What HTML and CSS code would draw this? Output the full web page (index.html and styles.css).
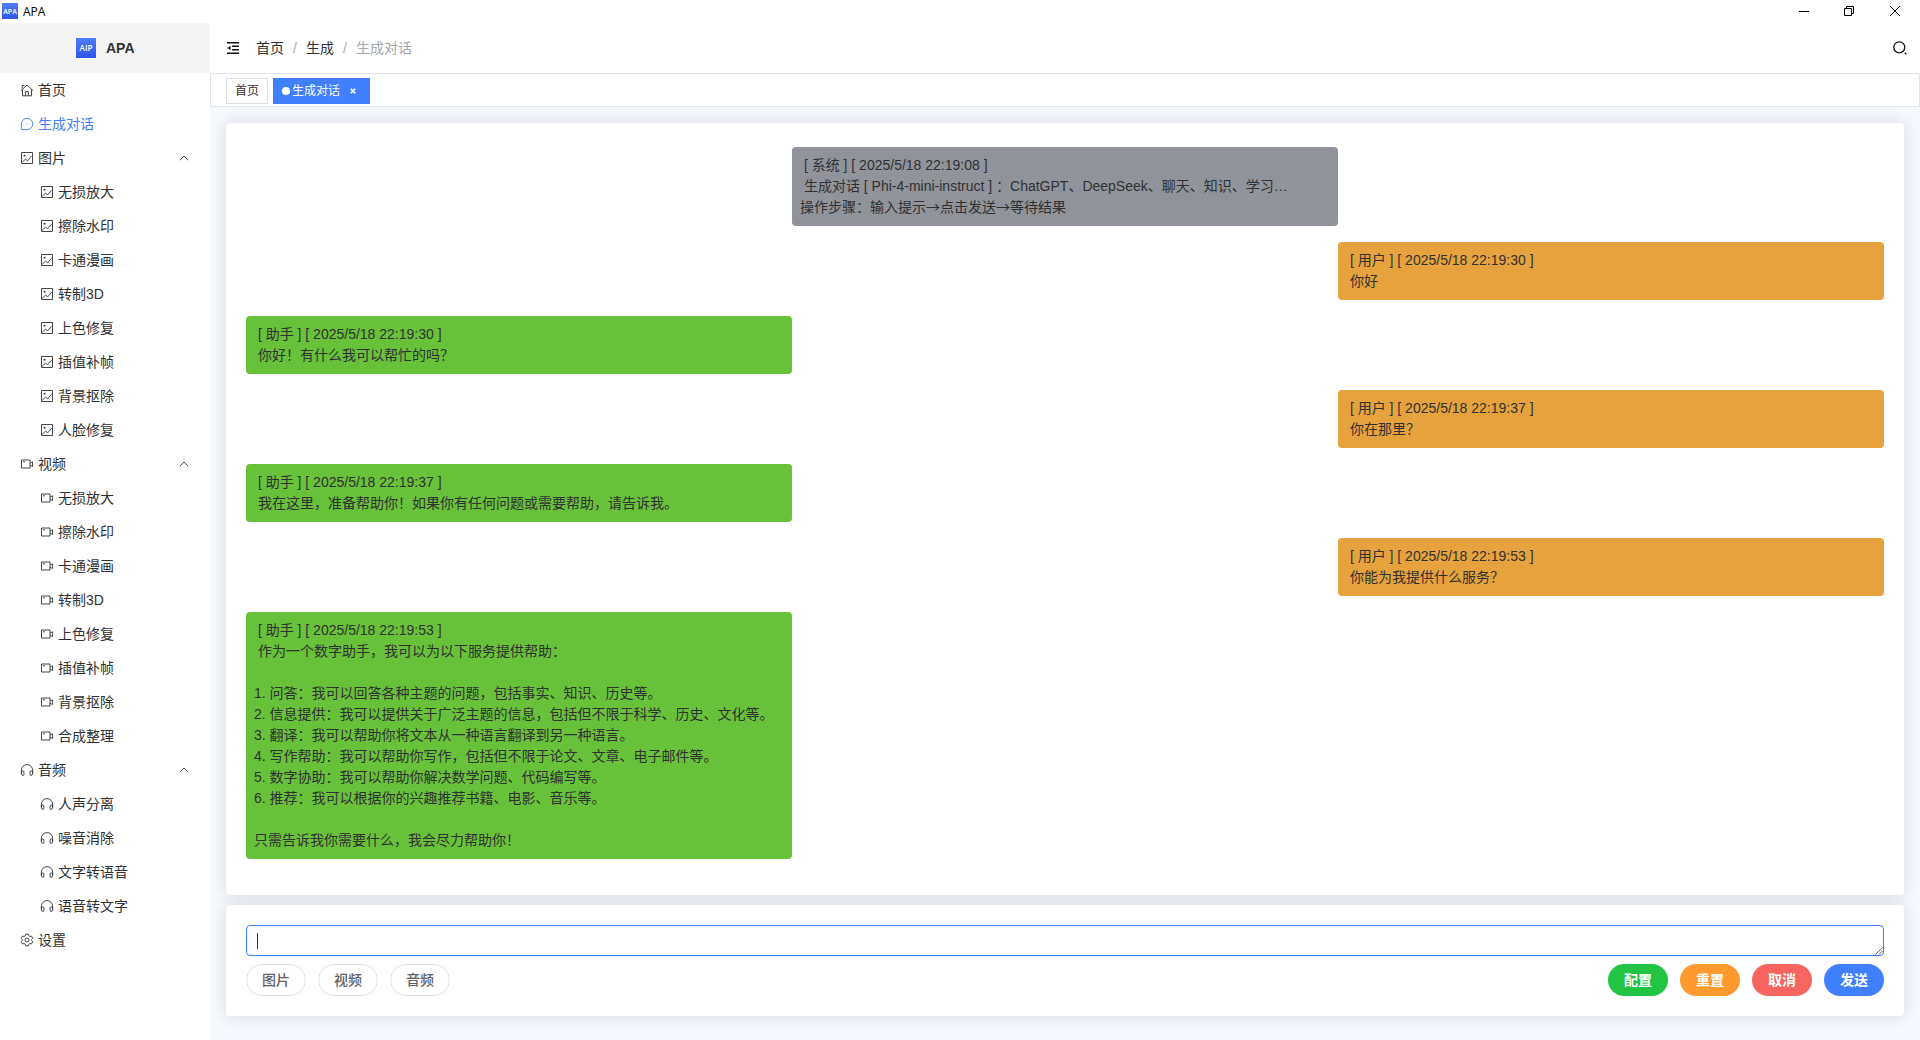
FILE: index.html
```html
<!DOCTYPE html>
<html lang="zh-CN">
<head>
<meta charset="utf-8">
<title>APA</title>
<link rel="stylesheet" href="styles.css">
</head>
<body>
<svg class="sprite" aria-hidden="true">
  <defs>
    <symbol id="home" viewBox="0 0 14 14"><path d="M1 7.600 7 2l6 5.600M2.500 6.500v6.300h9V6.500M2.200 5.500V2.500h2.300M5.600 12.800V8.600h2.800v4.200"/></symbol>
    <symbol id="chat" viewBox="0 0 14 14"><path d="M1.300 12.600V7A5.700 5.600 0 1 1 7 12.600z"/><path d="M6.500 7h1"/></symbol>
    <symbol id="pic" viewBox="0 0 14 14"><path d="M1.500 1.500h11v11h-11zM2.200 11.200l3.300-3 2.200 1.600 3.800-4.600"/><path d="M3.700 4.700h1.800" stroke-width="1.600"/></symbol>
    <symbol id="video" viewBox="0 0 14 14"><path d="M1.500 3h8.500v8H1.500zM10 6.200l2.600-1.400v4.700L10 8.200M3 4.800h2"/></symbol>
    <symbol id="audio" viewBox="0 0 14 14"><path d="M1.400 10.500V7.200a5.600 5.600 0 0 1 11.200 0v3.300"/><path d="M1.400 8h1.500q1 0 1 1v2.600q0 .8-.9.8-1.600 0-1.600-1.900zM12.600 8h-1.500q-1 0-1 1v2.600q0 .8.9.8 1.600 0 1.600-1.900z"/></symbol>
    <symbol id="gear" viewBox="0 0 14 14"><path d="M5.700 1.200h2.600l.5 1.700 1 .6 1.700-.4 1.300 2.200L11.600 6.500v1l1.200 1.200-1.300 2.200-1.700-.4-1 .6-.5 1.700H5.700l-.5-1.700-1-.6-1.700.4-1.300-2.200L2.400 7.500v-1L1.200 5.300l1.300-2.200 1.700.4 1-.6z"/><circle cx="7" cy="7" r="2"/></symbol>
    <symbol id="up" viewBox="0 0 12 12"><path d="M2 8.200 6 4l4 4.200"/></symbol>
    <linearGradient id="blue" x1="0" y1="0" x2="0" y2="1"><stop offset="0" stop-color="#4f7df6"/><stop offset="1" stop-color="#2f55ea"/></linearGradient>
  </defs>
</svg>

<header class="titlebar">
  <svg class="app-icon" viewBox="0 0 16 16"><rect width="16" height="16" fill="url(#blue)"/><text x="8" y="10.500" font-size="7">APA</text></svg>
  <span class="app-name">APA</span>
  <div class="window-controls">
    <svg viewBox="0 0 10 10"><path d="M0 5.500h10"/></svg>
    <svg viewBox="0 0 10 10"><path d="M.5 2.500h7v7h-7zM2.500 2.500v-2h7v7h-2"/></svg>
    <svg viewBox="0 0 10 10"><path d="m0 0 10 10M10 0 0 10"/></svg>
  </div>
</header>

<div class="app">
  <aside class="sidebar">
    <div class="brand">
      <svg class="brand-icon" viewBox="0 0 20 20"><rect width="20" height="20" fill="url(#blue)"/><text x="10" y="13.200" font-size="8.200">AIP</text></svg>
      <span>APA</span>
    </div>
    <nav class="menu">
      <a class="item"><svg><use href="#home"/></svg>首页</a>
      <a class="item active"><svg><use href="#chat"/></svg>生成对话</a>
      <a class="item"><svg><use href="#pic"/></svg>图片<svg class="arrow"><use href="#up"/></svg></a>
      <a class="item sub"><svg><use href="#pic"/></svg>无损放大</a>
      <a class="item sub"><svg><use href="#pic"/></svg>擦除水印</a>
      <a class="item sub"><svg><use href="#pic"/></svg>卡通漫画</a>
      <a class="item sub"><svg><use href="#pic"/></svg>转制3D</a>
      <a class="item sub"><svg><use href="#pic"/></svg>上色修复</a>
      <a class="item sub"><svg><use href="#pic"/></svg>插值补帧</a>
      <a class="item sub"><svg><use href="#pic"/></svg>背景抠除</a>
      <a class="item sub"><svg><use href="#pic"/></svg>人脸修复</a>
      <a class="item"><svg><use href="#video"/></svg>视频<svg class="arrow"><use href="#up"/></svg></a>
      <a class="item sub"><svg><use href="#video"/></svg>无损放大</a>
      <a class="item sub"><svg><use href="#video"/></svg>擦除水印</a>
      <a class="item sub"><svg><use href="#video"/></svg>卡通漫画</a>
      <a class="item sub"><svg><use href="#video"/></svg>转制3D</a>
      <a class="item sub"><svg><use href="#video"/></svg>上色修复</a>
      <a class="item sub"><svg><use href="#video"/></svg>插值补帧</a>
      <a class="item sub"><svg><use href="#video"/></svg>背景抠除</a>
      <a class="item sub"><svg><use href="#video"/></svg>合成整理</a>
      <a class="item"><svg><use href="#audio"/></svg>音频<svg class="arrow"><use href="#up"/></svg></a>
      <a class="item sub"><svg><use href="#audio"/></svg>人声分离</a>
      <a class="item sub"><svg><use href="#audio"/></svg>噪音消除</a>
      <a class="item sub"><svg><use href="#audio"/></svg>文字转语音</a>
      <a class="item sub"><svg><use href="#audio"/></svg>语音转文字</a>
      <a class="item"><svg><use href="#gear"/></svg>设置</a>
    </nav>
  </aside>

  <main class="main">
    <div class="topbar">
      <svg class="fold" viewBox="0 0 12 12"><path d="M0 .75h12M5 4.250h7M5 7.750h7M0 11.250h12" stroke="#111" stroke-width="1.300"/><path d="M.5 6l3-2.300v4.600z" fill="#111"/></svg>
      <div class="crumbs"><span>首页</span><i>/</i><span>生成</span><i>/</i><span class="current">生成对话</span></div>
      <svg class="search" viewBox="0 0 14 14"><circle cx="6.300" cy="6.300" r="5.500"/><path d="m11.800 11.800 1.600 1.600"/></svg>
    </div>
    <div class="tags">
      <a class="tag">首页</a>
      <a class="tag on"><b class="dot"></b>生成对话<svg class="close" viewBox="0 0 6 6"><path d="m.8.8 4.400 4.400M5.200.8.8 5.200"/></svg></a>
    </div>
    <div class="content">
      <section class="card chat">
        <div class="msg system"> [ 系统 ] [ 2025/5/18 22:19:08 ]
 生成对话 [ Phi-4-mini-instruct ] ：ChatGPT、DeepSeek、聊天、知识、学习…<div class="steps">操作步骤：输入提示→点击发送→等待结果</div></div>
        <div class="msg user"> [ 用户 ] [ 2025/5/18 22:19:30 ]
 你好</div>
        <div class="msg bot"> [ 助手 ] [ 2025/5/18 22:19:30 ]
 你好！有什么我可以帮忙的吗？</div>
        <div class="msg user"> [ 用户 ] [ 2025/5/18 22:19:37 ]
 你在那里？</div>
        <div class="msg bot"> [ 助手 ] [ 2025/5/18 22:19:37 ]
 我在这里，准备帮助你！如果你有任何问题或需要帮助，请告诉我。</div>
        <div class="msg user"> [ 用户 ] [ 2025/5/18 22:19:53 ]
 你能为我提供什么服务？</div>
        <div class="msg bot"> [ 助手 ] [ 2025/5/18 22:19:53 ]
 作为一个数字助手，我可以为以下服务提供帮助：

1. 问答：我可以回答各种主题的问题，包括事实、知识、历史等。
2. 信息提供：我可以提供关于广泛主题的信息，包括但不限于科学、历史、文化等。
3. 翻译：我可以帮助你将文本从一种语言翻译到另一种语言。
4. 写作帮助：我可以帮助你写作，包括但不限于论文、文章、电子邮件等。
5. 数字协助：我可以帮助你解决数学问题、代码编写等。
6. 推荐：我可以根据你的兴趣推荐书籍、电影、音乐等。

只需告诉我你需要什么，我会尽力帮助你！</div>
      </section>
      <section class="card composer">
        <div class="input">
          <span class="caret"></span>
          <svg class="grip" viewBox="0 0 8 8"><path d="M.5 7.500l7-7M4 7.500 7.500 4"/></svg>
        </div>
        <div class="actions">
          <button class="btn">图片</button>
          <button class="btn">视频</button>
          <button class="btn">音频</button>
          <button class="btn solid green first">配置</button>
          <button class="btn solid orange">重置</button>
          <button class="btn solid red">取消</button>
          <button class="btn solid blue">发送</button>
        </div>
      </section>
    </div>
  </main>
</div>
</body>
</html>
```
FILE: styles.css
```css
* { box-sizing: border-box; }
body {
  margin: 0;
  height: 1040px;
  display: flex;
  flex-direction: column;
  overflow: hidden;
  background: #fff;
  color: #303133;
  font: 14px/21px "Liberation Sans", "Noto Sans CJK SC", sans-serif;
}
svg { display: block; flex: none; fill: none; stroke: currentColor; }
.sprite { position: absolute; width: 0; height: 0; }

.titlebar { height: 23px; display: flex; align-items: center; padding: 0 20px 1px 2px; color: #000; }
.app-icon { width: 16px; height: 16px; stroke: none; }
.app-icon text, .brand-icon text { fill: #fff; stroke: none; text-anchor: middle; font-family: "Open Sans", sans-serif; font-weight: 600; }
.app-name { margin: 1px 0 0 5px; font: 12px/16px "Open Sans", sans-serif; }
.window-controls { margin-left: auto; display: flex; gap: 36px; }
.window-controls svg { width: 10px; height: 10px; }
.window-controls svg:first-child { margin-right: -1px; }

.app { flex: 1; display: flex; min-height: 0; }
.sidebar { width: 210px; background: #fff; position: relative; z-index: 1; }
.brand { height: 50px; background: #f5f5f5; display: flex; align-items: center; padding-left: 76px; gap: 10px; font-weight: 700; }
.brand-icon { width: 20px; height: 20px; stroke: none; }
.item { height: 34px; display: flex; align-items: center; gap: 4px; padding: 0 20px; }
.item svg { width: 14px; height: 14px; stroke-width: .9; }
.item .arrow { width: 12px; height: 12px; margin-left: auto; }
.sub { padding-left: 40px; }
.active { color: #4080ff; }

.main { flex: 1; display: flex; flex-direction: column; }
.topbar { height: 50px; display: flex; align-items: center; padding: 0 13px 0 17px; }
.fold { width: 12px; height: 12px; stroke: none; }
.crumbs { display: flex; margin-left: 17px; }
.crumbs i { font-style: normal; color: #a8abb2; margin: 0 9px; width: 4px; }
.crumbs .current { color: #a3a6ad; }
.search { width: 14px; height: 14px; margin-left: auto; color: #111; stroke-width: 1.3; }
.tags { height: 34px; border: 1px solid #e4e4ed; display: flex; align-items: center; gap: 5px; padding: 2px 15px 0; }
.tag { height: 26px; display: flex; align-items: center; border: 1px solid #dcdfe6; padding: 0 8px; font-size: 12px; }
.tag.on { width: 97px; background: #4080ff; border-color: #4080ff; color: #fff; }
.dot { width: 8px; height: 8px; border-radius: 50%; background: #fff; margin-right: 2px; }
.close { width: 6px; height: 6px; margin-left: 10px; stroke-width: 1.6; }

.content { flex: 1; background: #f5f8fd; padding: 16px 16px 24px; display: flex; flex-direction: column; gap: 10px; }
.card { background: #fff; border-radius: 4px; box-shadow: 0 0 16px rgba(0, 0, 0, .12); }
.chat { height: 772px; padding: 24px 20px; display: flex; flex-direction: column; gap: 16px; }
.msg { width: 546px; padding: 8px; border-radius: 4px; white-space: pre; }
.steps { padding-bottom: 2px; font: 14px/19px "Noto Sans CJK SC", sans-serif; }
.system { align-self: center; background: #909399; }
.user { align-self: flex-end; background: #e6a23c; }
.bot { align-self: flex-start; background: #67c23a; }

.composer { height: 111px; padding: 20px; display: flex; flex-direction: column; gap: 8px; }
.input { height: 31px; border: 1px solid #4080ff; border-radius: 4px; display: flex; align-items: center; padding-left: 10px; position: relative; }
.caret { width: 1px; height: 16px; background: #333; }
.grip { position: absolute; right: 0; bottom: 0; width: 8px; height: 8px; color: #555; stroke-width: .9; }
.actions { display: flex; gap: 12px; }
.btn { width: 60px; height: 32px; padding: 0 0 2px; border: 1px solid #dcdfe6; border-radius: 16px; background: #fff; color: #606266; font: 500 14px/1 "Noto Sans CJK SC", sans-serif; }
.first { margin-left: auto; }
.solid { border: 0; color: #fff; font-weight: 700; }
.green { background: #23c343; }
.orange { background: #ff9a2e; }
.red { background: #f76560; }
.blue { background: #4080ff; }
```
